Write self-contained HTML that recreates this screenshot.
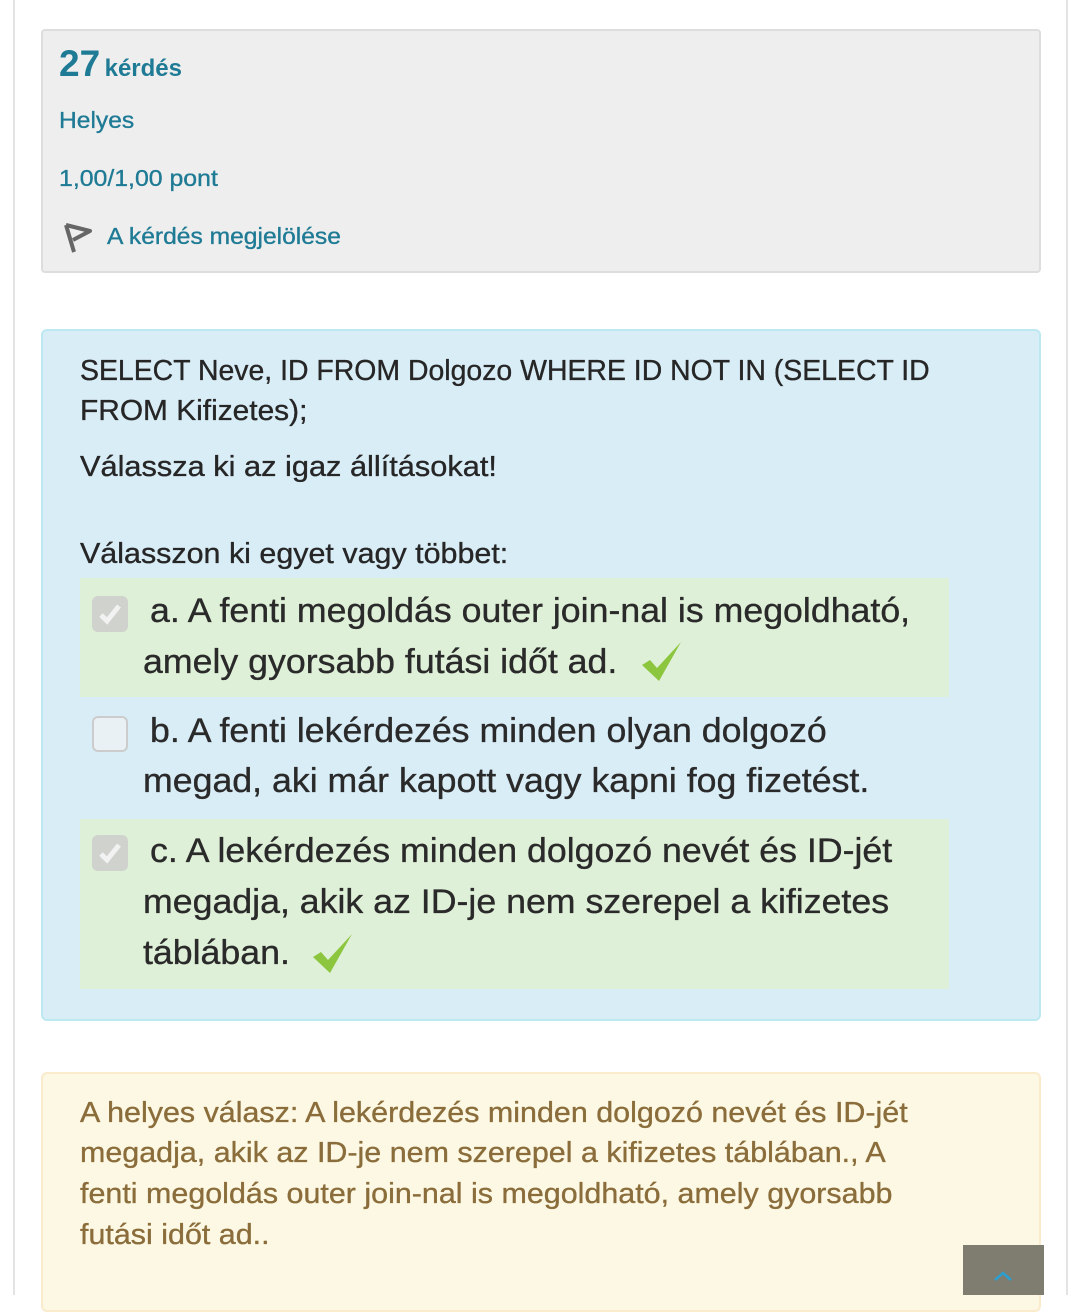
<!DOCTYPE html>
<html><head><meta charset="utf-8"><style>
body{margin:0;width:1080px;height:1295px;background:#fff;position:relative;overflow:hidden;font-family:"Liberation Sans",sans-serif;}
.l{position:absolute;white-space:nowrap;transform-origin:0 50%;-webkit-text-stroke:0.35px currentColor;}
.a{transform:scaleX(1.05);}
.box{position:absolute;box-sizing:border-box;border-radius:6px;}
</style></head><body>
<div style="position:absolute;left:13px;top:0;width:2px;height:1295px;background:#e3e3e3"></div>
<div style="position:absolute;left:1066px;top:0;width:2px;height:1295px;background:#e3e3e3"></div>

<div class="box" style="left:41px;top:29px;width:1000px;height:244px;background:#eee;border:2px solid #ddd;border-radius:4px"></div>
<div class="l" style="left:59px;top:42px;line-height:44px;color:#1f7b95;font-weight:bold;-webkit-text-stroke:0"><span style="font-size:37px">27</span> <span style="font-size:24px">kérdés</span></div>
<div class="l" style="left:59px;top:105px;line-height:30px;font-size:23px;color:#1f7b95;transform:scaleX(1.07)">Helyes</div>
<div class="l" style="left:59px;top:163px;line-height:30px;font-size:23px;color:#1f7b95;transform:scaleX(1.08)">1,00/1,00 pont</div>
<svg style="position:absolute;left:62px;top:221px" width="32" height="34" viewBox="0 0 32 34"><path d="M4 4 L12 31 M4 4 L28 10 L11 19" fill="none" stroke="#666" stroke-width="4" stroke-linejoin="round"/></svg>
<div class="l" style="left:107px;top:221px;line-height:30px;font-size:23px;color:#1f7b95;transform:scaleX(1.07)">A kérdés megjelölése</div>

<div class="box" style="left:41px;top:329px;width:1000px;height:692px;background:#d9edf7;border:2px solid #bce8f1"></div>
<div class="l" style="left:80px;top:351px;line-height:40px;font-size:29px;color:#262626;transform:scaleX(.98)">SELECT Neve, ID FROM Dolgozo WHERE ID NOT IN (SELECT ID</div>
<div class="l" style="left:80px;top:391px;line-height:40px;font-size:29px;color:#262626;transform:scaleX(1.03)">FROM Kifizetes);</div>
<div class="l" style="left:80px;top:447px;line-height:40px;font-size:29px;color:#262626;transform:scaleX(1.06)">Válassza ki az igaz állításokat!</div>
<div class="l" style="left:80px;top:534px;line-height:40px;font-size:29px;color:#262626;transform:scaleX(1.05)">Válasszon ki egyet vagy többet:</div>

<div style="position:absolute;left:80px;top:578px;width:869px;height:119px;background:#dff0d8"></div>
<div style="position:absolute;left:80px;top:819px;width:869px;height:170px;background:#dff0d8"></div>

<div style="position:absolute;left:92px;top:596px;width:36px;height:36px;border-radius:6px;background:#cfd2cd"></div>
<svg style="position:absolute;left:96px;top:600px" width="28" height="28" viewBox="0 0 28 28"><path d="M5 15 L11 21 L23 6" fill="none" stroke="#f2f2f2" stroke-width="5"/></svg>
<div style="position:absolute;left:92px;top:716px;width:32px;height:32px;border-radius:6px;background:#eaf1f4;border:2px solid #ccc"></div>
<div style="position:absolute;left:92px;top:835px;width:36px;height:36px;border-radius:6px;background:#cfd2cd"></div>
<svg style="position:absolute;left:96px;top:839px" width="28" height="28" viewBox="0 0 28 28"><path d="M5 15 L11 21 L23 6" fill="none" stroke="#f2f2f2" stroke-width="5"/></svg>

<div class="l a" style="left:150px;top:588px;line-height:46px;font-size:34px;color:#2a2a2a">a. A fenti megoldás outer join-nal is megoldható,</div>
<div class="l a" style="left:143px;top:639px;line-height:46px;font-size:34px;color:#2a2a2a">amely gyorsabb futási időt ad.</div>
<svg style="position:absolute;left:641px;top:641px" width="42" height="42" viewBox="0 0 42 42"><path d="M1 24 L9 19 L16 27 L40 1 L18 40 Z" fill="#8cc63e"/></svg>
<div class="l a" style="left:150px;top:708px;line-height:46px;font-size:34px;color:#2a2a2a">b. A fenti lekérdezés minden olyan dolgozó</div>
<div class="l a" style="left:143px;top:758px;line-height:46px;font-size:34px;color:#2a2a2a">megad, aki már kapott vagy kapni fog fizetést.</div>
<div class="l a" style="left:150px;top:828px;line-height:46px;font-size:34px;color:#2a2a2a">c. A lekérdezés minden dolgozó nevét és ID-jét</div>
<div class="l a" style="left:143px;top:879px;line-height:46px;font-size:34px;color:#2a2a2a">megadja, akik az ID-je nem szerepel a kifizetes</div>
<div class="l a" style="left:143px;top:930px;line-height:46px;font-size:34px;color:#2a2a2a">táblában.</div>
<svg style="position:absolute;left:312px;top:933px" width="42" height="42" viewBox="0 0 42 42"><path d="M1 24 L9 19 L16 27 L40 1 L18 40 Z" fill="#8cc63e"/></svg>

<div class="box" style="left:41px;top:1072px;width:1000px;height:240px;background:#fcf8e3;border:2px solid #faebcc"></div>
<div class="l a" style="left:80px;top:1093px;line-height:40px;font-size:29px;color:#8a6d3b">A helyes válasz: A lekérdezés minden dolgozó nevét és ID-jét</div>
<div class="l a" style="left:80px;top:1133px;line-height:40px;font-size:29px;color:#8a6d3b">megadja, akik az ID-je nem szerepel a kifizetes táblában., A</div>
<div class="l a" style="left:80px;top:1174px;line-height:40px;font-size:29px;color:#8a6d3b">fenti megoldás outer join-nal is megoldható, amely gyorsabb</div>
<div class="l a" style="left:80px;top:1215px;line-height:40px;font-size:29px;color:#8a6d3b">futási időt ad..</div>

<div style="position:absolute;left:963px;top:1245px;width:81px;height:50px;background:#7f7c70"></div>
<svg style="position:absolute;left:993px;top:1270px" width="20" height="12" viewBox="0 0 20 12"><path d="M2 10 L10 3 L18 10" fill="none" stroke="#2aa0d0" stroke-width="2.5"/></svg>
</body></html>
